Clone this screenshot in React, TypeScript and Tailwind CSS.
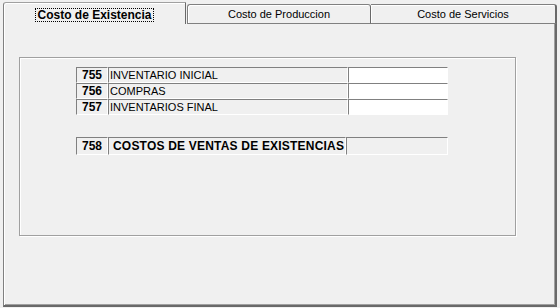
const rows = [
  { code: '755', label: 'INVENTARIO INICIAL' },
  { code: '756', label: 'COMPRAS' },
  { code: '757', label: 'INVENTARIOS FINAL' },
];

const cell =
  'border-t border-l border-t-[#808080] border-l-[#808080] border-b border-r border-b-white border-r-white';

const App = () => {
  return (
    <div className="flex h-[308px] w-[560px] flex-col bg-[#f0f0f0] pt-[2px] pl-[3px] font-['Liberation_Sans',Arial,sans-serif] text-black">
      {/* tabs */}
      <div className="flex h-[22px] w-[554px] items-end">
        <div className="flex h-[22px] w-[183px] justify-center rounded-tl-[3px] border-t border-l border-r border-t-[#a0a0a0] border-l-[#808080] border-r-[#696969] bg-[#f0f0f0] pt-[5px] shadow-[inset_1px_1px_0_white]">
          <span className="h-[14px] border border-dotted border-black px-[1px] text-[12px] leading-[12px] font-bold">
            Costo de Existencia
          </span>
        </div>
        <div className="ml-[1px] flex h-[20px] w-[184px] justify-center rounded-t-[3px] border border-[#808080] border-r-[#696969] pt-[3px] text-[11px] leading-[13px] shadow-[inset_1px_1px_0_white]">
          Costo de Produccion
        </div>
        <div className="flex h-[20px] w-[186px] justify-center rounded-tr-[3px] border border-l-0 border-[#808080] border-r-2 border-r-[#696969] pt-[3px] text-[11px] leading-[13px] shadow-[inset_1px_1px_0_white]">
          Costo de Servicios
        </div>
      </div>

      {/* panel */}
      <div className="h-[283px] w-[554px] border-l border-r-2 border-b-2 border-l-[#808080] border-r-[#696969] border-b-[#696969] shadow-[inset_1px_0_0_white,inset_-1px_-1px_0_#a0a0a0]">
        <div className="mt-[33px] ml-[15px] h-[179px] w-[497px] border border-[#a0a0a0] pt-[9px] pl-[56px] shadow-[inset_1px_1px_0_white,1px_1px_0_white]">
          <div className="flex flex-col">
            {rows.map((r) => (
              <div key={r.code} className="grid h-[16px] grid-cols-[32px_240px_100px]">
                <div className={`${cell} flex items-center justify-center text-[12px] leading-[14px] font-bold`}>
                  {r.code}
                </div>
                <div className={`${cell} flex items-center pl-[1px] text-[11px] leading-[14px]`}>{r.label}</div>
                <div className={`${cell} bg-white`} />
              </div>
            ))}
          </div>
          <div className="mt-[22px] grid h-[18px] grid-cols-[32px_238px_102px]">
            <div className={`${cell} flex items-center justify-center text-[12px] leading-[14px] font-bold`}>758</div>
            <div className={`${cell} flex items-center pl-[4px] text-[12px] leading-[14px] font-bold tracking-[0.2px]`}>
              COSTOS DE VENTAS DE EXISTENCIAS
            </div>
            <div className={cell} />
          </div>
        </div>
      </div>
    </div>
  );
};

export default App;
